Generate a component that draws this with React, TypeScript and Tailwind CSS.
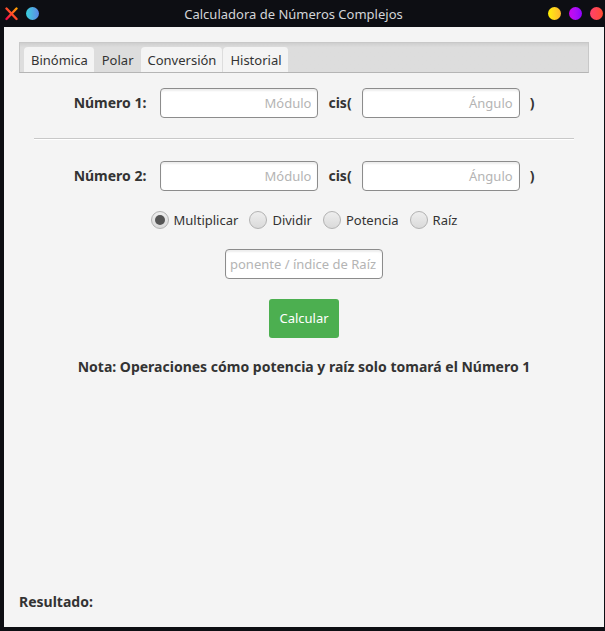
import { useState } from "react";

const tabs = ["Binómica", "Polar", "Conversión", "Historial"];
const operations = ["Multiplicar", "Dividir", "Potencia", "Raíz"];

const fieldClass =
  "h-[30px] w-[158px] rounded border border-[#8c8c8c] bg-white pl-1 pr-1.5 text-right text-[13px] text-[#333333] shadow-[inset_0_2px_2px_#eeeeee] outline-none placeholder:text-[#b4b4b4]";

function TitleBar() {
  return (
    <header className="flex h-[27px] items-center justify-between pr-0.5 pl-1">
      <div className="flex w-[60px] items-center gap-2">
        <button aria-label="Cerrar">
          <svg width="14" height="14" viewBox="0 0 14 14" className="block">
            <defs>
              <linearGradient id="cross" x1="0" y1="1" x2="1" y2="0">
                <stop offset="0" stopColor="#f5094a" />
                <stop offset="0.5" stopColor="#ff4b2b" />
                <stop offset="1" stopColor="#ffa000" />
              </linearGradient>
            </defs>
            <path d="M2.5 1.5 L12.5 12 M12.5 1.5 L2.5 12" stroke="url(#cross)" strokeWidth="2.4" strokeLinecap="round" fill="none" />
          </svg>
        </button>
        <button aria-label="Fijar" className="size-[13px] rounded-full bg-linear-to-r from-[#36d1dc] to-[#5b86e5]" />
      </div>
      <h1 className="text-[13px] leading-[18px] text-[#d3d5d8]">Calculadora de Números Complejos</h1>
      <div className="flex w-20 items-center justify-end gap-2">
        <button aria-label="Minimizar" className="size-[13px] rounded-full bg-linear-to-r from-[#fff000] to-[#ffb52b]" />
        <button aria-label="Maximizar" className="size-[13px] rounded-full bg-linear-to-r from-[#cc00ee] to-[#8f00ff]" />
        <button aria-label="Salir" className="size-[13px] rounded-full bg-linear-to-r from-[#ff416c] to-[#ff4b2b]" />
      </div>
    </header>
  );
}

function NumberRow({ n }: { n: number }) {
  return (
    <div className="flex items-center justify-center gap-2.5 text-[14px] leading-[18px] font-bold">
      <label htmlFor={`modulo-${n}`} className="pr-1">
        Número {n}:
      </label>
      <input id={`modulo-${n}`} placeholder="Módulo" className={`${fieldClass} font-normal`} />
      <label htmlFor={`angulo-${n}`}>cis(</label>
      <input id={`angulo-${n}`} placeholder="Ángulo" className={`${fieldClass} font-normal`} />
      <span>)</span>
    </div>
  );
}

export default function App() {
  const [tab, setTab] = useState("Polar");
  const [operation, setOperation] = useState("Multiplicar");

  return (
    <div className="flex min-h-screen flex-col bg-[#0d0e13] font-['Noto_Sans',sans-serif] text-[#333333]">
      <TitleBar />
      <main className="mr-px mb-1 ml-1 flex grow flex-col bg-[#f4f4f4] px-[15px] pt-[15px] pb-4">
        <div
          role="tablist"
          className="flex h-[31px] items-end border border-[#c8c8c8] border-b-[#b5b5b5] bg-linear-to-b from-[#cecece] to-[#dddddd] to-15% pl-1"
        >
          {tabs.map((name) => (
            <button
              key={name}
              role="tab"
              aria-selected={name === tab}
              onClick={() => setTab(name)}
              className={`h-[25px] rounded-t border-r border-[#dddddd] pr-1.5 pl-[7px] text-[13px] leading-[18px] ${name === tab ? "bg-[#dddddd]" : "bg-[#f4f4f4]"}`}
            >
              {name}
            </button>
          ))}
        </div>

        <section className="flex flex-col px-[15px] pt-[15px]">
          <NumberRow n={1} />
          <hr className="mt-5 mb-[22px] border-t border-[#c8c8c8] shadow-[0_1px_0_#ffffff]" />
          <NumberRow n={2} />

          <div className="mt-5 flex justify-center gap-[11px]">
            {operations.map((name) => (
              <label key={name} className="flex items-center gap-[5px] text-[13px] leading-[18px]">
                <input
                  type="radio"
                  name="operacion"
                  checked={name === operation}
                  onChange={() => setOperation(name)}
                  className="grid size-[18px] appearance-none place-items-center rounded-full border border-[#b2b2b2] bg-linear-to-b from-[#eeeeee] to-[#dadada] before:size-2.5 before:rounded-full checked:before:bg-[#555555]"
                />
                {name}
              </label>
            ))}
          </div>

          <div className="mt-5 flex flex-col items-center gap-5">
            <input aria-label="Exponente / índice de Raíz" placeholder="ponente / índice de Raíz" className={fieldClass} />
            <button className="h-[39px] rounded-[3px] bg-[#4caf50] px-2.5 text-[13px] text-white">Calcular</button>
            <p className="text-[14px] leading-[18px] font-bold">
              Nota: Operaciones cómo potencia y raíz solo tomará el Número 1
            </p>
          </div>
        </section>

        <p className="mt-auto text-[14px] leading-[18px] font-bold">Resultado:</p>
      </main>
    </div>
  );
}
